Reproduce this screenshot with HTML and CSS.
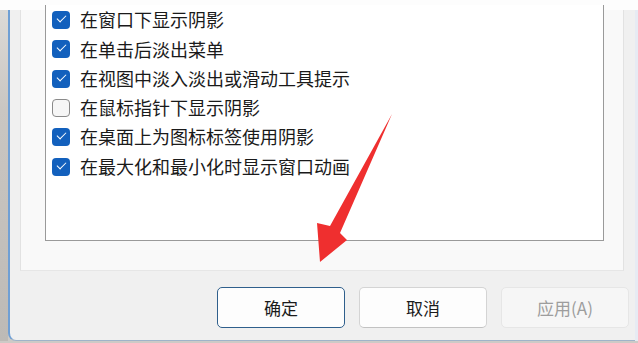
FILE: index.html
```html
<!DOCTYPE html>
<html lang="zh-CN">
<head>
    <meta charset="UTF-8">
    <title>性能选项</title>
    <link rel="stylesheet" href="styles.css">
</head>
<body>
    <div class="top-band"></div>
    <div class="desk">
        <div class="behind"></div>
        <div class="window">
            <div class="panel">
                <ul class="listbox">
                    <li><span class="check on"></span>在窗口下显示阴影</li>
                    <li><span class="check on"></span>在单击后淡出菜单</li>
                    <li><span class="check on"></span>在视图中淡入淡出或滑动工具提示</li>
                    <li><span class="check"></span>在鼠标指针下显示阴影</li>
                    <li><span class="check on"></span>在桌面上为图标标签使用阴影</li>
                    <li><span class="check on"></span>在最大化和最小化时显示窗口动画</li>
                </ul>
            </div>
            <div class="buttons">
                <button class="btn default">确定</button>
                <button class="btn">取消</button>
                <button class="btn disabled">应用(A)</button>
            </div>
        </div>
        <div class="edge"></div>
    </div>

    <svg class="arrow" width="638" height="343" viewBox="0 0 638 343">
        <polygon points="392,114 330,226 317,223 320,262 347,240 340,233" fill="#ef2f2f"/>
    </svg>
</body>
</html>
```

FILE: styles.css
```css
* {
    margin: 0;
    padding: 0;
    box-sizing: border-box;
    list-style: none;
}
body {
    width: 638px;
    height: 343px;
    overflow: hidden;
    background: #cdcac6;
    font-family: "Noto Sans CJK SC", "Liberation Sans", sans-serif;
    color: #1a1a1a;
    position: relative;
}
.top-band {
    height: 10px;
    background: #fdfdfd;
}
.desk {
    display: flex;
    height: 331px;
}
.behind {
    width: 8px;
    background: linear-gradient(#dcdad7, #c9c6c2 30%, #bdbab6);
}
.edge {
    width: 3px;
    background: #e7ebf3;
}
.window {
    flex: 1;
    display: flex;
    flex-direction: column;
    background: #f0f0f0;
    border-left: 2px solid #6f9fd4;
    border-bottom: 1px solid #9fb3c9;
    border-bottom-left-radius: 8px;
    padding-right: 6px;
}
.panel {
    margin-left: 10px;
    margin-right: 5px;
    height: 261px;
    background: #f9f9f9;
    border-left: 1px solid #e2e2e2;
    border-right: 1px solid #e2e2e2;
    border-bottom: 1px solid #e6e6e6;
    padding: 0 19px 25px 24px;
}
.listbox {
    height: 236px;
    background: #fff;
    border: 1px solid #9a9a9a;
    border-top: none;
    padding-left: 6px;
}
.listbox li {
    display: flex;
    align-items: center;
    height: 29.3px;
    font-size: 18px;
    line-height: 1.2;
    white-space: nowrap;
}
.listbox li:first-child {
    margin-top: -4.6px;
}
.check {
    width: 18px;
    height: 18px;
    margin-right: 10px;
    border-radius: 4px;
    border: 1.5px solid #8a8a8a;
    background: #f6f6f6;
    flex: none;
    position: relative;
}
.check.on {
    border: none;
    background: #1260bd;
}
.check.on::after {
    content: '';
    position: absolute;
    left: 5px;
    top: 4px;
    width: 8px;
    height: 4px;
    border-left: 1.4px solid #fff;
    border-bottom: 1.4px solid #fff;
    transform: rotate(-45deg);
}
.buttons {
    display: flex;
    justify-content: flex-end;
    gap: 14px;
    margin-top: 16px;
}
.btn {
    width: 128px;
    height: 41px;
    font-family: inherit;
    font-size: 17px;
    color: #1b1b1b;
    background: #fdfdfd;
    border: 1px solid #d4d4d4;
    border-bottom-color: #c2c2c2;
    border-radius: 5px;
}
.btn.default {
    border: 1.5px solid #2f5f8c;
}
.btn.disabled {
    background: #f6f6f6;
    border-color: #e6e6e6;
    color: #9d9d9d;
}
.arrow {
    position: absolute;
    left: 0;
    top: 0;
}
```
